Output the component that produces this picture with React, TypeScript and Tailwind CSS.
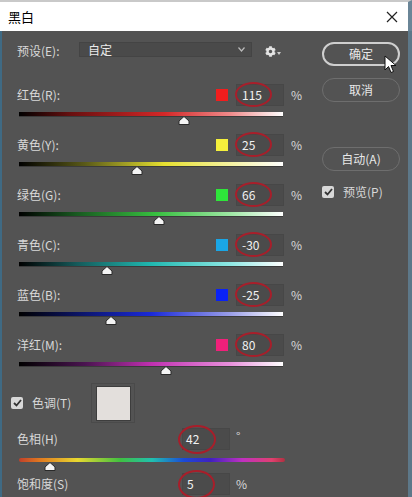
import React from 'react';
import { FaCog } from 'react-icons/fa';

type Channel = {
  label: string;
  color: string;
  value: string;
  thumb: number;
  track: string;
};

const channels: Channel[] = [
  { label: '红色(R):', color: '#f21d1d', value: '115', thumb: 165, track: 'linear-gradient(to right,#000 0%,#6a1010 20%,#d42828 55%,#f08a8a 80%,#fff 100%)' },
  { label: '黄色(Y):', color: '#f5f03c', value: '25', thumb: 118, track: 'linear-gradient(to right,#000 0%,#5a5a18 25%,#e6e030 55%,#f5f2a0 80%,#fff 100%)' },
  { label: '绿色(G):', color: '#2ee63a', value: '66', thumb: 140, track: 'linear-gradient(to right,#000 0%,#185a20 22%,#38c040 52%,#9ee8a4 80%,#fff 100%)' },
  { label: '青色(C):', color: '#1aa6e6', value: '-30', thumb: 88, track: 'linear-gradient(to right,#000 0%,#155a5a 22%,#20b8b0 50%,#8ee8e4 80%,#fff 100%)' },
  { label: '蓝色(B):', color: '#0a22f5', value: '-25', thumb: 92, track: 'linear-gradient(to right,#000 0%,#0c1670 25%,#1a2ad8 50%,#9a9ee8 80%,#fff 100%)' },
  { label: '洋红(M):', color: '#f0207a', value: '80', thumb: 147, track: 'linear-gradient(to right,#000 0%,#4a1450 25%,#c030b0 50%,#e890dc 80%,#fff 100%)' },
];

function Thumb({ left }: { left: number }) {
  return (
    <svg
      className="absolute top-[4px]"
      style={{ left: left - 6 }}
      width="12"
      height="9"
      viewBox="0 0 12 9"
    >
      <path d="M6 0.5 L11 5 L11 8.5 L1 8.5 L1 5 Z" fill="#f4f4f4" stroke="#2a2a2a" strokeWidth="1" />
    </svg>
  );
}

function Ellipse({ className }: { className: string }) {
  return <span className={`pointer-events-none absolute rounded-[50%] border-2 border-[#a81e2a] ${className}`} />;
}

function Check({ size = 12 }: { size?: number }) {
  return (
    <span className="flex items-center justify-center rounded-[2px] bg-[#d8d8d8]" style={{ width: size, height: size }}>
      <svg width="9" height="8" viewBox="0 0 9 8">
        <path d="M1 4 L3.5 6.5 L8 1" fill="none" stroke="#333" strokeWidth="1.8" />
      </svg>
    </span>
  );
}

function ChannelRow({ ch }: { ch: Channel }) {
  return (
    <div className="flex h-[50px] flex-col">
      <div className="flex h-[22px] items-center">
        <span className="w-[199px]">{ch.label}</span>
        <span className="h-3 w-3" style={{ background: ch.color }} />
        <div className="relative ml-2 flex h-[22px] w-[48px] items-center border border-[#474747] bg-[#4b4b4b] pl-[5px] text-[#f2f2f2]">
          {ch.value}
          <Ellipse className="-left-[2px] -top-[3px] h-[25px] w-[37px]" />
        </div>
        <span className="ml-[7px]">%</span>
      </div>
      <div className="relative ml-[2px] mt-[6px] h-1 w-[264px] shadow-[0_1px_0_#3a3a3a]" style={{ background: ch.track }}>
        <Thumb left={ch.thumb} />
      </div>
    </div>
  );
}

function Button({ label, primary }: { label: string; primary?: boolean }) {
  return (
    <div
      className={`flex h-[24px] w-[78px] items-center justify-center rounded-full text-[#e8e8e8] ${
        primary ? 'border-2 border-[#cfcfcf]' : 'border border-[#6e6e6e]'
      }`}
    >
      {label}
    </div>
  );
}

export default function App() {
  return (
    <div className="flex h-[497px] w-[412px] flex-col overflow-hidden bg-[#535353] font-['Noto_Sans_CJK_SC','Liberation_Sans',sans-serif] text-[12px] text-[#d8d8d8]">
      <div className="flex h-[31px] items-center justify-between border-t-2 border-r-[4px] border-t-[#c9c9c9] border-r-[#6a8597] bg-white pl-2 pr-[10px]">
        <span className="text-[13px] text-black">黑白</span>
        <svg width="12" height="12" viewBox="0 0 12 12">
          <path d="M1 1 L11 11 M11 1 L1 11" stroke="#222" strokeWidth="1.2" />
        </svg>
      </div>
      <div className="flex flex-1 border-l-2 border-r-[4px] border-l-[#3f6a84] border-r-[#5d7889]">
        <div className="flex w-[318px] flex-col pl-[15px]">
          <div className="mt-[11px] flex h-[15px] items-center">
            <span className="w-[62px] pt-[3px]">预设(E):</span>
            <div className="flex h-[15px] w-[173px] items-center justify-between border border-[#444] bg-[#4a4a4a] pl-2 pr-[6px] text-[#eaeaea]">
              <span>自定</span>
              <svg width="7" height="5" viewBox="0 0 7 5">
                <path d="M0.5 0.5 L3.5 4 L6.5 0.5" fill="none" stroke="#bbb" strokeWidth="1.2" />
              </svg>
            </div>
            <div className="ml-[13px] mt-[3px] flex items-center text-[#e4e4e4]">
              <FaCog size={11} />
              <svg className="ml-[1px] mt-[5px]" width="4" height="3" viewBox="0 0 4 3">
                <path d="M0 0 L4 0 L2 3 Z" fill="#ccc" />
              </svg>
            </div>
          </div>
          <div className="mt-[27px] flex flex-col">
            {channels.map((ch) => (
              <ChannelRow key={ch.label} ch={ch} />
            ))}
          </div>
          <div className="-ml-[6px] flex h-[38px] items-center">
            <Check />
            <span className="ml-[9px]">色调(T)</span>
            <div className="ml-[20px] flex h-[40px] w-[44px] items-center justify-center border border-[#4a4a4a]">
              <span className="h-[35px] w-[35px] border border-[#3d3d3d] bg-[#e3dfdc]" />
            </div>
          </div>
          <div className="mt-[6px] flex h-[22px] items-center">
            <span className="w-[165px]">色相(H)</span>
            <div className="relative flex h-[22px] w-[48px] items-center border border-[#474747] bg-[#4b4b4b] pl-[3px] text-[#f2f2f2]">
              42
              <Ellipse className="-left-[5px] -top-[4px] h-[29px] w-[38px]" />
            </div>
            <span className="ml-[6px] -mt-[6px]">°</span>
          </div>
          <div className="relative ml-[2px] mt-[8px] h-1 w-[266px] rounded-full bg-[linear-gradient(to_right,#c0402a_0%,#e07a20_8%,#e8d830_22%,#40c040_38%,#20c0b0_50%,#1a4ad8_62%,#4020c0_72%,#c030c0_84%,#e04070_95%,#b03040_100%)]">
            <Thumb left={31} />
          </div>
          <div className="mt-[11px] flex h-[22px] items-center">
            <span className="w-[165px]">饱和度(S)</span>
            <div className="relative flex h-[22px] w-[48px] items-center border border-[#474747] bg-[#4b4b4b] pl-[4px] text-[#f2f2f2]">
              5
              <Ellipse className="-left-[5px] -top-[4px] h-[29px] w-[37px]" />
            </div>
            <span className="ml-[6px]">%</span>
          </div>
        </div>
        <div className="flex flex-col pl-[2px] pt-[11px]">
          <div className="relative">
            <Button label="确定" primary />
            <svg className="absolute left-[62px] top-[13px]" width="13" height="19" viewBox="0 0 13 19">
              <path d="M1 1 L1 15 L4.5 11.5 L7 17.5 L9.5 16.5 L7 10.5 L12 10.5 Z" fill="#fff" stroke="#111" strokeWidth="1" />
            </svg>
          </div>
          <div className="mt-[12px]">
            <Button label="取消" />
          </div>
          <div className="mt-[45px]">
            <Button label="自动(A)" />
          </div>
          <div className="mt-[12px] flex items-center">
            <Check />
            <span className="ml-[9px]">预览(P)</span>
          </div>
        </div>
      </div>
    </div>
  );
}
